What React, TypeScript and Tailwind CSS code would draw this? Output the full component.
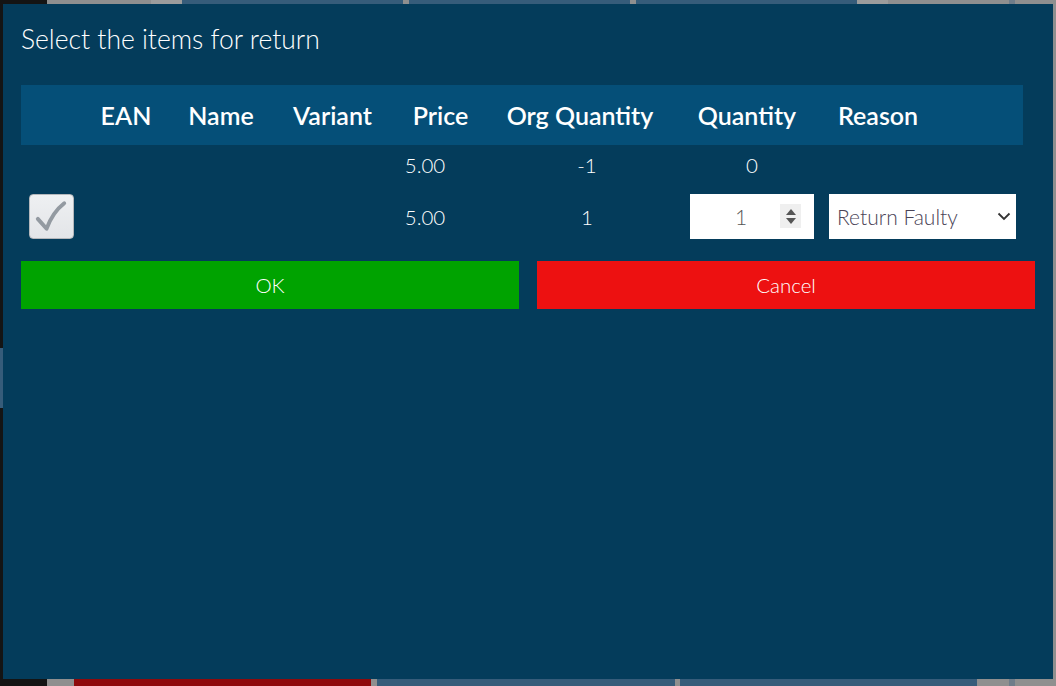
import { useState } from 'react';

const headers = [
  { label: '', w: 'w-[61px]' },
  { label: 'EAN', w: 'w-[88px]' },
  { label: 'Name', w: 'w-[102px]' },
  { label: 'Variant', w: 'w-[121px]' },
  { label: 'Price', w: 'w-[95px]' },
  { label: 'Org Quantity', w: 'w-[184px]' },
  { label: 'Quantity', w: 'w-[150px]' },
];

const CheckBox = ({ checked }: { checked: boolean }) => (
  <div className="flex h-[45px] w-[45px] items-center justify-center rounded-[4px] border border-[#b4b7bb] bg-gradient-to-b from-[#eef0f2] to-[#e3e5e8]">
    {checked && (
      <svg width="44" height="44" viewBox="0 0 44 44" fill="none">
        <path
          d="M8 25 L17 35 C21 24 26 16 35 9"
          stroke="#939aa1"
          strokeWidth="4"
          strokeLinecap="round"
          strokeLinejoin="round"
        />
      </svg>
    )}
  </div>
);

const QuantityInput = ({ value }: { value: number }) => (
  <div className="flex h-[45px] w-[124px] items-center bg-white">
    <span className="flex-1 pt-[2px] pl-[12px] text-center text-[21px] font-light text-[#555]">{value}</span>
    <div className="mr-[13px] flex h-[24px] w-[21px] flex-col items-center justify-center gap-[3px] bg-[#efefef]">
      <svg width="10" height="6" viewBox="0 0 10 6">
        <path d="M0 6 L5 0 L10 6 Z" fill="#555" />
      </svg>
      <svg width="10" height="6" viewBox="0 0 10 6">
        <path d="M0 0 L10 0 L5 6 Z" fill="#555" />
      </svg>
    </div>
  </div>
);

const ReasonSelect = ({ value }: { value: string }) => (
  <div className="flex h-[45px] w-[187px] items-center justify-between bg-white pr-[5px] pl-[8px]">
    <span className="pt-[2px] text-[21px] font-light text-[#4a4356]">{value}</span>
    <svg width="14" height="9" viewBox="0 0 14 9" fill="none">
      <path d="M1.5 1.5 L7 7 L12.5 1.5" stroke="#333" strokeWidth="1.8" />
    </svg>
  </div>
);

export default function App() {
  const [checked] = useState(true);

  return (
    <div className="flex h-[686px] w-[1056px] flex-col overflow-hidden bg-[#141414] font-['Lato','Noto_Sans',sans-serif]">
      <div className="flex h-[4px] shrink-0">
        <div className="w-[47px] bg-[#141414]" />
        <div className="w-[104px] bg-[#8f8f8f]" />
        <div className="w-[31px] bg-[#9c9c9c]" />
        <div className="w-[221px] bg-[#365c7a]" />
        <div className="w-[6px] bg-[#8f8f8f]" />
        <div className="w-[221px] bg-[#365c7a]" />
        <div className="w-[6px] bg-[#8f8f8f]" />
        <div className="w-[221px] bg-[#365c7a]" />
        <div className="w-[31px] bg-[#9c9c9c]" />
        <div className="w-[121px] bg-[#8f8f8f]" />
        <div className="w-[6px] bg-[#6f7d8a]" />
        <div className="flex-1 bg-[#8f8f8f]" />
      </div>

      <div className="flex h-[675px] shrink-0">
        <div className="flex w-[3px] flex-col">
          <div className="h-[344px] bg-[#141414]" />
          <div className="h-[60px] bg-[#365c7a]" />
          <div className="flex-1 bg-[#141414]" />
        </div>

        <div className="flex w-[1050px] flex-col bg-[#043c5b] px-[18px] pt-[19px]">
          <h1 className="text-[26.5px] leading-[32px] font-light text-white">Select the items for return</h1>

          <div className="mt-[30px] w-[1002px]">
            <div className="flex h-[60px] items-center bg-[#054f78] pt-[2px] text-[25px] font-semibold text-white">
              {headers.map((h, i) => (
                <div key={i} className={`${h.w} text-center`}>
                  {h.label}
                </div>
              ))}
              <div className="flex-1 pl-[16px]">Reason</div>
            </div>

            <div className="flex h-[40px] items-center text-[20.5px] font-light text-white">
              <div className="w-[364px]" />
              <div className="w-[80px] text-center">5.00</div>
              <div className="w-[82px]" />
              <div className="w-[80px] text-center">-1</div>
              <div className="w-[63px]" />
              <div className="w-[124px] text-center">0</div>
            </div>

            <div className="mt-[7px] flex h-[48px] items-center text-[20.5px] font-light text-white">
              <div className="w-[61px] pl-[8px]">
                <CheckBox checked={checked} />
              </div>
              <div className="w-[303px]" />
              <div className="w-[80px] pt-[2px] text-center">5.00</div>
              <div className="w-[82px]" />
              <div className="w-[80px] pt-[2px] text-center">1</div>
              <div className="w-[63px]" />
              <QuantityInput value={1} />
              <div className="w-[15px]" />
              <ReasonSelect value="Return Faulty" />
            </div>
          </div>

          <div className="mt-[21px] flex gap-[18px]">
            <button
              type="button"
              className="h-[48px] flex-1 bg-[#00a300] text-[20.5px] font-light text-white"
            >
              OK
            </button>
            <button
              type="button"
              className="h-[48px] flex-1 bg-[#ed1111] text-[20.5px] font-light text-white"
            >
              Cancel
            </button>
          </div>
        </div>

        <div className="w-[3px] bg-[#8f8f8f]" />
      </div>

      <div className="flex h-[7px] shrink-0">
        <div className="w-[47px] bg-[#141414]" />
        <div className="w-[27px] bg-[#8f8f8f]" />
        <div className="w-[297px] bg-[#8e0a0c]" />
        <div className="w-[6px] bg-[#8f8f8f]" />
        <div className="w-[298px] bg-[#365c7a]" />
        <div className="w-[5px] bg-[#8f8f8f]" />
        <div className="w-[297px] bg-[#365c7a]" />
        <div className="w-[32px] bg-[#8f8f8f]" />
        <div className="w-[6px] bg-[#6f7d8a]" />
        <div className="flex-1 bg-[#8f8f8f]" />
      </div>
    </div>
  );
}
